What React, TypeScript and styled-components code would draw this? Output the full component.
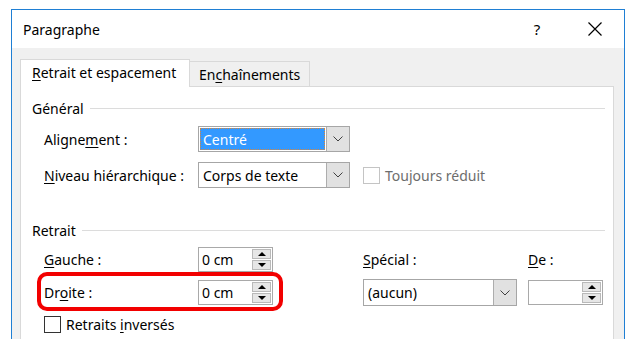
import React from "react";
import styled, { createGlobalStyle } from "styled-components";

const GlobalStyle = createGlobalStyle`
  html, body {
    margin: 0;
    padding: 0;
    background: #ffffff;
  }
  body {
    font-family: "Noto Sans", "Open Sans", sans-serif;
    font-size: 14px;
    color: #000000;
  }
`;

const Page = styled.div`
  width: 641px;
  height: 358px;
  padding: 9px 0 0 11px;
  box-sizing: border-box;
  background: #ffffff;
`;

const Frame = styled.div`
  width: 614px;
  height: 330px;
  border: 1px solid #1f7fd4;
  border-bottom: none;
  box-sizing: border-box;
  overflow: hidden;
  display: flex;
  flex-direction: column;
  background: #f0f0f0;
`;

const TitleBar = styled.div`
  height: 38px;
  flex-shrink: 0;
  display: flex;
  align-items: center;
  background: #ffffff;
  padding-left: 11px;
`;

const Title = styled.div`
  flex: 1;
  font-size: 14px;
`;

const TitleButton = styled.div`
  width: 58px;
  height: 38px;
  display: flex;
  align-items: center;
  justify-content: center;
  font-size: 15px;
`;

const Body = styled.div`
  flex: 1;
  display: flex;
  flex-direction: column;
  padding: 11px 10px 0 8px;
`;

const TabStrip = styled.div`
  display: flex;
  align-items: flex-end;
  height: 28px;
`;

const Tab = styled.div<{ $active?: boolean }>`
  box-sizing: border-box;
  display: flex;
  align-items: center;
  border: 1px solid #d9d9d9;
  ${(p) =>
    p.$active
      ? `
    width: 170px;
    height: 28px;
    background: #ffffff;
    border-bottom: none;
    padding: 0 0 2px 11px;
  `
      : `
    width: 120px;
    height: 26px;
    background: #f0f0f0;
    border-left: none;
    padding: 0 0 0 9px;
  `}
`;

const TabFiller = styled.div`
  flex: 1;
  border-bottom: 1px solid #d9d9d9;
`;

const Panel = styled.div`
  flex: 1;
  background: #ffffff;
  border-left: 1px solid #d9d9d9;
  border-right: 1px solid #d9d9d9;
  padding: 11px 8px 0 11px;
`;

const GroupHeader = styled.div<{ $gap?: number }>`
  display: flex;
  align-items: center;
  height: 20px;
  gap: 6px;
  margin-top: ${(p) => p.$gap ?? 0}px;
`;

const GroupLine = styled.div`
  flex: 1;
  height: 1px;
  background: #dcdcdc;
`;

const FieldRow = styled.div<{ $gap: number }>`
  display: flex;
  align-items: center;
  height: 26px;
  margin-top: ${(p) => p.$gap}px;
  padding-left: 12px;
`;

const Label = styled.div<{ $width?: number; $disabled?: boolean }>`
  width: ${(p) => (p.$width ? `${p.$width}px` : "auto")};
  flex-shrink: 0;
  white-space: nowrap;
  color: ${(p) => (p.$disabled ? "#6d6d6d" : "#000000")};
`;

const Key = styled.span`
  text-decoration: underline;
  text-underline-offset: 2px;
`;

const Combo = styled.div<{ $width: number; $height?: number }>`
  box-sizing: border-box;
  width: ${(p) => p.$width}px;
  height: ${(p) => p.$height ?? 26}px;
  border: 1px solid #a6a6a6;
  background: #ffffff;
  display: flex;
  flex-shrink: 0;
`;

const ComboValue = styled.div<{ $selected?: boolean }>`
  flex: 1;
  display: flex;
  align-items: center;
  margin: 1px;
  padding-left: 3px;
  box-sizing: border-box;
  ${(p) =>
    p.$selected
      ? `
    background: #3399ff;
    color: #ffffff;
    outline: 1px dotted #d9853a;
    outline-offset: -1px;
  `
      : ""}
`;

const ComboButton = styled.div`
  width: 22px;
  display: flex;
  align-items: center;
  justify-content: center;
  background: #e1e1e1;
  border-left: 1px solid #adadad;
`;

const Spin = styled.div`
  box-sizing: border-box;
  width: 75px;
  height: 25px;
  border: 1px solid #a9a9a9;
  background: #ffffff;
  display: flex;
  flex-shrink: 0;
`;

const SpinValue = styled.div`
  flex: 1;
  display: flex;
  align-items: center;
  padding-left: 3px;
`;

const SpinButtons = styled.div`
  width: 19px;
  margin: 1px;
  display: flex;
  flex-direction: column;
  gap: 1px;
`;

const SpinButton = styled.div<{ $down?: boolean }>`
  flex: 1;
  background: #e6e6e6;
  border: 1px solid #b9b9b9;
  display: flex;
  align-items: center;
  justify-content: center;

  &::after {
    content: "";
    width: 0;
    height: 0;
    border-left: 4px solid transparent;
    border-right: 4px solid transparent;
    ${(p) =>
      p.$down
        ? "border-top: 4px solid #000000;"
        : "border-bottom: 4px solid #000000;"}
  }
`;

const RetraitGrid = styled.div`
  position: relative;
  display: grid;
  grid-template-columns: 154px 75px 90px 154px 11px 77px;
  grid-template-rows: 24px 27px 20px;
  row-gap: 8px;
  align-items: center;
  margin-top: 7px;
  padding-left: 12px;
`;

const Cell = styled.div<{ $col: number }>`
  grid-column: ${(p) => p.$col};
  display: flex;
  align-items: center;
`;

const Highlight = styled.div`
  position: absolute;
  left: 5px;
  top: 25px;
  width: 246px;
  height: 39px;
  box-sizing: border-box;
  border: 4px solid #f20000;
  border-radius: 10px;
  pointer-events: none;
`;

const CheckRow = styled.div`
  grid-column: 1 / span 3;
  display: flex;
  align-items: center;
  gap: 5px;
`;

const CheckBox = styled.div<{ $disabled?: boolean }>`
  box-sizing: border-box;
  width: 17px;
  height: 17px;
  flex-shrink: 0;
  background: #ffffff;
  border: 1px solid ${(p) => (p.$disabled ? "#c4c4c4" : "#333333")};
`;

const Chevron = () => (
  <svg width="10" height="6" viewBox="0 0 10 6">
    <polyline
      points="0.5,0.5 5,5 9.5,0.5"
      fill="none"
      stroke="#404040"
      strokeWidth="1"
    />
  </svg>
);

const CloseIcon = () => (
  <svg width="14" height="14" viewBox="0 0 14 14">
    <path d="M0.5 0.5 L13.5 13.5 M13.5 0.5 L0.5 13.5" stroke="#000000" strokeWidth="1.2" />
  </svg>
);

function SpinBox({ value }: { value: string }) {
  return (
    <Spin>
      <SpinValue>{value}</SpinValue>
      <SpinButtons>
        <SpinButton />
        <SpinButton $down />
      </SpinButtons>
    </Spin>
  );
}

export default function App() {
  return (
    <Page>
      <GlobalStyle />
      <Frame>
        <TitleBar>
          <Title>Paragraphe</Title>
          <TitleButton>?</TitleButton>
          <TitleButton>
            <CloseIcon />
          </TitleButton>
        </TitleBar>
        <Body>
          <TabStrip>
            <Tab $active>
              <span>
                <Key>R</Key>etrait et espacement
              </span>
            </Tab>
            <Tab>
              <span>
                En<Key>c</Key>haînements
              </span>
            </Tab>
            <TabFiller />
          </TabStrip>
          <Panel>
            <GroupHeader>
              <span>Général</span>
              <GroupLine />
            </GroupHeader>
            <FieldRow $gap={8}>
              <Label $width={154}>
                Aligne<Key>m</Key>ent :
              </Label>
              <Combo $width={152}>
                <ComboValue $selected>Centré</ComboValue>
                <ComboButton>
                  <Chevron />
                </ComboButton>
              </Combo>
            </FieldRow>
            <FieldRow $gap={10}>
              <Label $width={154}>
                <Key>N</Key>iveau hiérarchique :
              </Label>
              <Combo $width={152}>
                <ComboValue>Corps de texte</ComboValue>
                <ComboButton>
                  <Chevron />
                </ComboButton>
              </Combo>
              <CheckRow style={{ marginLeft: 13 }}>
                <CheckBox $disabled />
                <Label $disabled>Toujours réduit</Label>
              </CheckRow>
            </FieldRow>

            <GroupHeader $gap={32}>
              <span>Retrait</span>
              <GroupLine />
            </GroupHeader>
            <RetraitGrid>
              <Cell $col={1}>
                <Label>
                  <Key>G</Key>auche :
                </Label>
              </Cell>
              <Cell $col={2}>
                <SpinBox value="0 cm" />
              </Cell>
              <Cell $col={4}>
                <Label>
                  <Key>S</Key>pécial :
                </Label>
              </Cell>
              <Cell $col={6}>
                <Label>
                  <Key>D</Key>e :
                </Label>
              </Cell>

              <Cell $col={1}>
                <Label>
                  Dr<Key>o</Key>ite :
                </Label>
              </Cell>
              <Cell $col={2}>
                <SpinBox value="0 cm" />
              </Cell>
              <Cell $col={4}>
                <Combo $width={154} $height={27}>
                  <ComboValue>(aucun)</ComboValue>
                  <ComboButton>
                    <Chevron />
                  </ComboButton>
                </Combo>
              </Cell>
              <Cell $col={6}>
                <SpinBox value="" />
              </Cell>

              <CheckRow>
                <CheckBox />
                <Label>
                  Retraits <Key>i</Key>nversés
                </Label>
              </CheckRow>
              <Highlight />
            </RetraitGrid>
          </Panel>
        </Body>
      </Frame>
    </Page>
  );
}
